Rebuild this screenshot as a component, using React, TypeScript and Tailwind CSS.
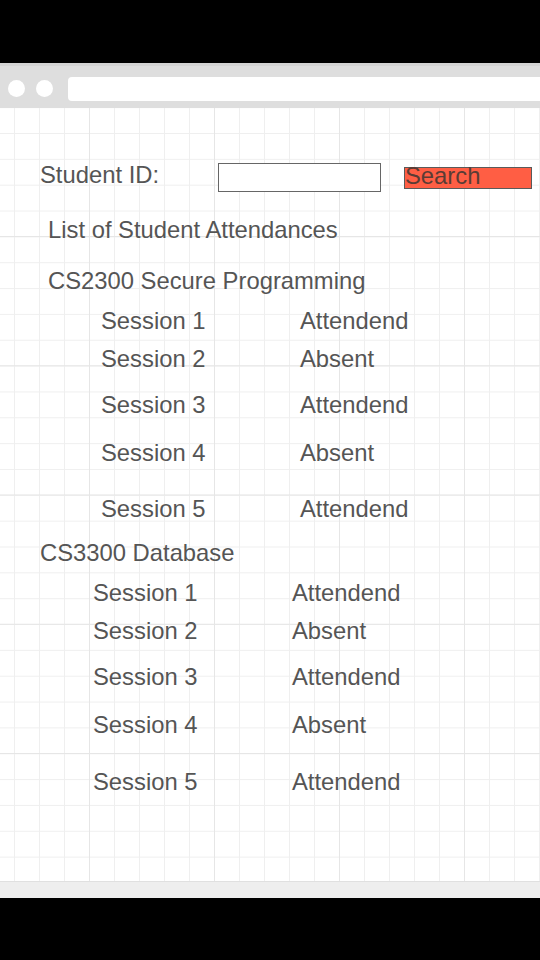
import React from 'react';

const sessions1 = [
  { name: 'Session 1', status: 'Attendend', gap: 'mt-[16px]' },
  { name: 'Session 2', status: 'Absent', gap: 'mt-[14px]' },
  { name: 'Session 3', status: 'Attendend', gap: 'mt-[22px]' },
  { name: 'Session 4', status: 'Absent', gap: 'mt-[24px]' },
  { name: 'Session 5', status: 'Attendend', gap: 'mt-[32px]' },
];

const sessions2 = [
  { name: 'Session 1', status: 'Attendend', gap: 'mt-[16px]' },
  { name: 'Session 2', status: 'Absent', gap: 'mt-[14px]' },
  { name: 'Session 3', status: 'Attendend', gap: 'mt-[22px]' },
  { name: 'Session 4', status: 'Absent', gap: 'mt-[24px]' },
  { name: 'Session 5', status: 'Attendend', gap: 'mt-[33px]' },
];

const Row: React.FC<{ name: string; status: string; gap: string; indent: string }> = ({ name, status, gap, indent }) => (
  <div className={`flex h-[24px] ${gap} ${indent}`}>
    <span className="w-[199px] shrink-0">{name}</span>
    <span>{status}</span>
  </div>
);

export default function App() {
  return (
    <div className="w-[540px] h-[960px] bg-black flex flex-col overflow-hidden">
      <div className="h-[63px] shrink-0" />

      {/* browser chrome */}
      <div className="h-[45px] shrink-0 bg-[#dedede] border-t-[3px] border-[#d4d4d4] flex items-center pt-[3px] pl-[8px]">
        <div className="w-[17px] h-[17px] rounded-full bg-white" />
        <div className="w-[17px] h-[17px] rounded-full bg-white ml-[11px]" />
        <div className="h-[24px] flex-1 bg-white rounded-l-[4px] ml-[15px]" />
      </div>

      {/* canvas */}
      <div
        className="h-[773px] shrink-0 bg-white pt-[55px] pl-[40px] text-[23.8px] leading-[24px] text-[#555555] [font-family:'Liberation_Sans',Arial,sans-serif] [background-image:linear-gradient(to_right,#e6e6e6_1px,transparent_1px),linear-gradient(to_bottom,#e6e6e6_1px,transparent_1px),linear-gradient(to_right,#efefef_1px,transparent_1px),linear-gradient(to_bottom,#efefef_1px,transparent_1px)] [background-size:125px_100%,100%_129.25px,25px_100%,100%_25.85px] [background-position:89px_0,0_128px,14px_0,0_25px]"
      >
        <div className="flex items-start">
          <span className="w-[178px] shrink-0">Student ID:</span>
          <div className="w-[163px] h-[29px] border border-[#666666] bg-white shrink-0" />
          <div className="ml-[23px] mt-[4px] w-[128px] h-[22px] bg-[#ff5e44] border border-[#5a5a5a] leading-[16px] text-[#5a3c35] whitespace-nowrap">
            Search
          </div>
        </div>

        <div className="mt-[26px] ml-[8px] h-[24px]">List of Student Attendances</div>
        <div className="mt-[27px] ml-[8px] h-[24px]">CS2300 Secure Programming</div>
        {sessions1.map((s) => (
          <Row key={'a' + s.name} {...s} indent="pl-[61px]" />
        ))}

        <div className="mt-[20px] h-[24px]">CS3300 Database</div>
        {sessions2.map((s) => (
          <Row key={'b' + s.name} {...s} indent="pl-[53px]" />
        ))}
      </div>

      <div className="h-[17px] shrink-0 bg-[#eeeeee] border-t border-[#e0e0e0]" />
      <div className="flex-1" />
    </div>
  );
}
